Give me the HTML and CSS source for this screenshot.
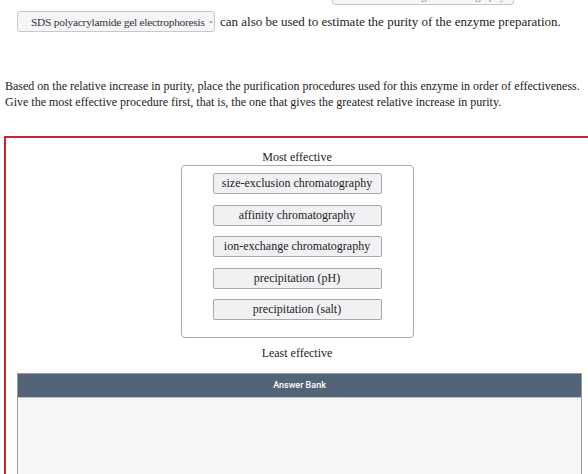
FILE: index.html
```html
<html>
<head>
<title>Purification order</title>
<link rel="stylesheet" href="styles.css">
</head>
<body>
<div class="question">

  <div class="prev-line">
    <span class="select prev-select">ion-exchange chromatography</span>
  </div>

  <div class="sentence">
    <span class="select">SDS polyacrylamide gel electrophoresis <span class="caret">&#8964;</span></span>
    <span>can also be used to estimate the purity of the enzyme preparation.</span>
  </div>

  <p class="prompt">
    Based on the relative increase in purity, place the purification procedures used for this enzyme in order of effectiveness.<br>
    Give the most effective procedure first, that is, the one that gives the greatest relative increase in purity.
  </p>

  <div class="answer-area">
    <div class="ranking">
      <div class="rank-label">Most effective</div>
      <div class="rank-box">
        <div class="rank-item">size-exclusion chromatography</div>
        <div class="rank-item">affinity chromatography</div>
        <div class="rank-item">ion-exchange chromatography</div>
        <div class="rank-item">precipitation (pH)</div>
        <div class="rank-item">precipitation (salt)</div>
      </div>
      <div class="rank-label least">Least effective</div>
    </div>

    <div class="answer-bank">
      <div class="bank-head">Answer Bank</div>
      <div class="bank-body"></div>
    </div>
  </div>

</div>
</body>
</html>
```

FILE: styles.css
```css
html, body {
  margin: 0;
  overflow: hidden;
  background: #fff;
}

body {
  font-family: "Liberation Serif", "Times New Roman", serif;
  font-size: 12px;
  color: #222;
}

.prev-line {
  margin-top: -16px;
  padding-left: 332px;
  height: 21px;
}

.select {
  display: inline-flex;
  align-items: center;
  box-sizing: border-box;
  height: 21px;
  padding: 0 4px 0 13px;
  background: #f6f6f8;
  border: 1px solid #c8c8cc;
  border-radius: 3px;
  color: #333;
  font-family: "Liberation Serif", "Times New Roman", serif;
  font-size: 11.4px;
  letter-spacing: -0.25px;
  white-space: nowrap;
  overflow: hidden;
}

.prev-select {
  width: 182px;
  color: #999;
  padding-left: 40px;
  padding-top: 3px;
}

.caret {
  font-size: 9px;
  color: #888;
  margin-left: 2px;
  position: relative;
  top: -2px;
}

.sentence {
  display: flex;
  align-items: center;
  gap: 5px;
  height: 21px;
  margin-top: 6px;
  padding-left: 17px;
  font-size: 13px;
}

.sentence .select {
  width: 198px;
  flex-shrink: 0;
}

.prompt {
  margin: 46px 0 0 0;
  padding-left: 5px;
  line-height: 16px;
}

.answer-area {
  margin: 26px 0 0 4px;
  width: 582px;
  border-top: 2px solid #c4262e;
  border-left: 2px solid #c4262e;
  height: 400px;
}

.ranking {
  display: flex;
  flex-direction: column;
  align-items: center;
  padding-top: 11px;
}

.rank-label {
  height: 16px;
  line-height: 16px;
  margin-bottom: 0;
}

.least {
  margin: 7px 0 0 0;
}

.rank-box {
  box-sizing: border-box;
  width: 233px;
  height: 173px;
  border: 1px solid #aaa;
  border-radius: 4px;
  padding: 7px 0;
  display: flex;
  flex-direction: column;
  align-items: center;
  gap: 10.5px;
}

.rank-item {
  box-sizing: border-box;
  width: 169px;
  height: 21px;
  line-height: 19px;
  text-align: center;
  background: #f1f1f4;
  border: 1px solid #a9a9ad;
  border-radius: 2px;
}

.answer-bank {
  margin: 12px 0 0 11px;
  width: 563px;
  border: 1px solid #999;
}

.bank-head {
  height: 23px;
  line-height: 22px;
  background: #536479;
  border-bottom: 1px solid #b5bfca;
  color: #fff;
  text-align: center;
  font-family: Roboto, "Liberation Sans", sans-serif;
  font-weight: 500;
  font-size: 9px;
}

.bank-body {
  height: 120px;
  background: #f7f7f7;
}
```
